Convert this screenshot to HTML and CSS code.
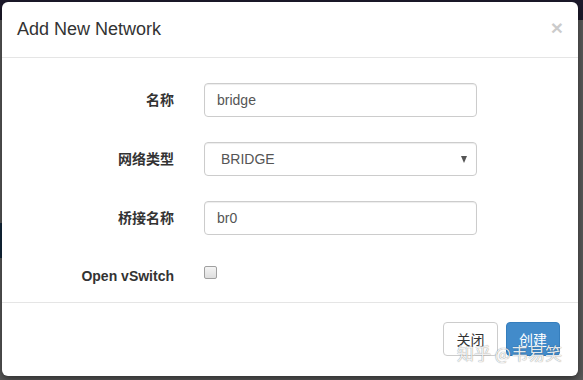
FILE: index.html
```html
<!DOCTYPE html>
<html lang="zh-CN">
<head>
    <meta charset="UTF-8">
    <title>Add New Network</title>
    <link rel="stylesheet" href="styles.css">
</head>
<body>
    <div class="topbar"></div>
    <div class="sidebar-mark"></div>

    <div class="modal">
        <div class="modal-header">
            <h4 class="modal-title">Add New Network</h4>
            <span class="close">&times;</span>
        </div>
        <div class="modal-body">
            <div class="form-row">
                <label class="control-label">名称</label>
                <div class="form-control">bridge</div>
            </div>
            <div class="form-row">
                <label class="control-label">网络类型</label>
                <div class="form-control select">
                    <span class="select-value">BRIDGE</span>
                    <span class="caret"></span>
                </div>
            </div>
            <div class="form-row">
                <label class="control-label">桥接名称</label>
                <div class="form-control">br0</div>
            </div>
            <div class="form-row row-check">
                <label class="control-label">Open vSwitch</label>
                <div><span class="checkbox"></span></div>
            </div>
        </div>
        <div class="modal-footer">
            <button class="btn btn-default">关闭</button>
            <button class="btn btn-primary">创建</button>
        </div>
    </div>

    <div class="watermark">知乎 @韦易笑</div>
</body>
</html>
```

FILE: styles.css
```css
body {
    margin: 0;
    height: 380px;
    background: #5a5a5a;
    font-family: "Liberation Sans", Arial, "Noto Sans CJK SC", sans-serif;
    font-size: 14px;
    color: #333;
    overflow: hidden;
}
.topbar {
    height: 20px;
    background: #1d1a2c;
}
.sidebar-mark {
    margin-top: 203px;
    width: 4px;
    height: 35px;
    background: #13293d;
}
.modal {
    position: absolute;
    left: 2px;
    top: 2px;
    width: 576px;
    height: 374px;
    background: #fff;
    border-radius: 6px;
    box-shadow: 0 3px 9px rgba(0, 0, 0, 0.5);
    overflow: hidden;
}
.modal-header {
    display: flex;
    justify-content: space-between;
    align-items: flex-start;
    padding: 15px;
    height: 25px;
    border-bottom: 1px solid #e5e5e5;
}
.modal-title {
    margin: 0;
    font-size: 18px;
    font-weight: normal;
    line-height: 25px;
    color: #333;
}
.close {
    font-size: 21px;
    font-weight: bold;
    line-height: 20px;
    color: #000;
    opacity: 0.2;
    margin-top: 1px;
}
.modal-body {
    padding: 25px 15px 15px;
    height: 204px;
    display: flex;
    flex-direction: column;
    gap: 25px;
}
.form-row {
    display: grid;
    grid-template-columns: 157px 273px;
    column-gap: 30px;
    align-items: start;
}
.control-label {
    text-align: right;
    font-weight: bold;
    padding-top: 7px;
    line-height: 20px;
}
.form-control {
    box-sizing: border-box;
    height: 34px;
    padding: 6px 12px;
    line-height: 20px;
    border: 1px solid #ccc;
    border-radius: 4px;
    color: #555;
    box-shadow: inset 0 1px 1px rgba(0, 0, 0, 0.075);
}
.select {
    display: flex;
    justify-content: space-between;
    align-items: center;
    padding-left: 16px;
    padding-right: 9px;
}
.caret {
    width: 0;
    height: 0;
    border-left: 3.5px solid transparent;
    border-right: 3.5px solid transparent;
    border-top: 7px solid #555;
}
.row-check .control-label {
    padding-top: 6px;
}
.checkbox {
    display: block;
    box-sizing: border-box;
    width: 13px;
    height: 13px;
    margin-top: 6px;
    border: 1px solid #a0a0a0;
    border-radius: 2px;
    background: linear-gradient(#f4f4f4, #dedede);
}
.modal-footer {
    border-top: 1px solid #e5e5e5;
    padding: 19px 18px 20px;
    display: flex;
    justify-content: flex-end;
    gap: 8px;
}
.btn {
    box-sizing: border-box;
    height: 34px;
    padding: 6px 0;
    text-align: center;
    font-size: 14px;
    line-height: 20px;
    border-radius: 4px;
    border: 1px solid transparent;
    font-family: "Noto Sans CJK SC", sans-serif;
    white-space: nowrap;
}
.btn-default {
    width: 55px;
    background: #fff;
    border-color: #ccc;
    color: #333;
}
.btn-primary {
    width: 54px;
    background: #428bca;
    border-color: #357ebd;
    color: #fff;
}
.watermark {
    position: absolute;
    left: 457px;
    top: 341px;
    font-family: "Noto Sans CJK SC", sans-serif;
    font-size: 17px;
    line-height: 24px;
    color: rgba(255, 255, 255, 0.9);
    text-shadow: 0 0 1px rgba(0, 0, 0, 0.35), 0 0 1px rgba(0, 0, 0, 0.25);
}
```
